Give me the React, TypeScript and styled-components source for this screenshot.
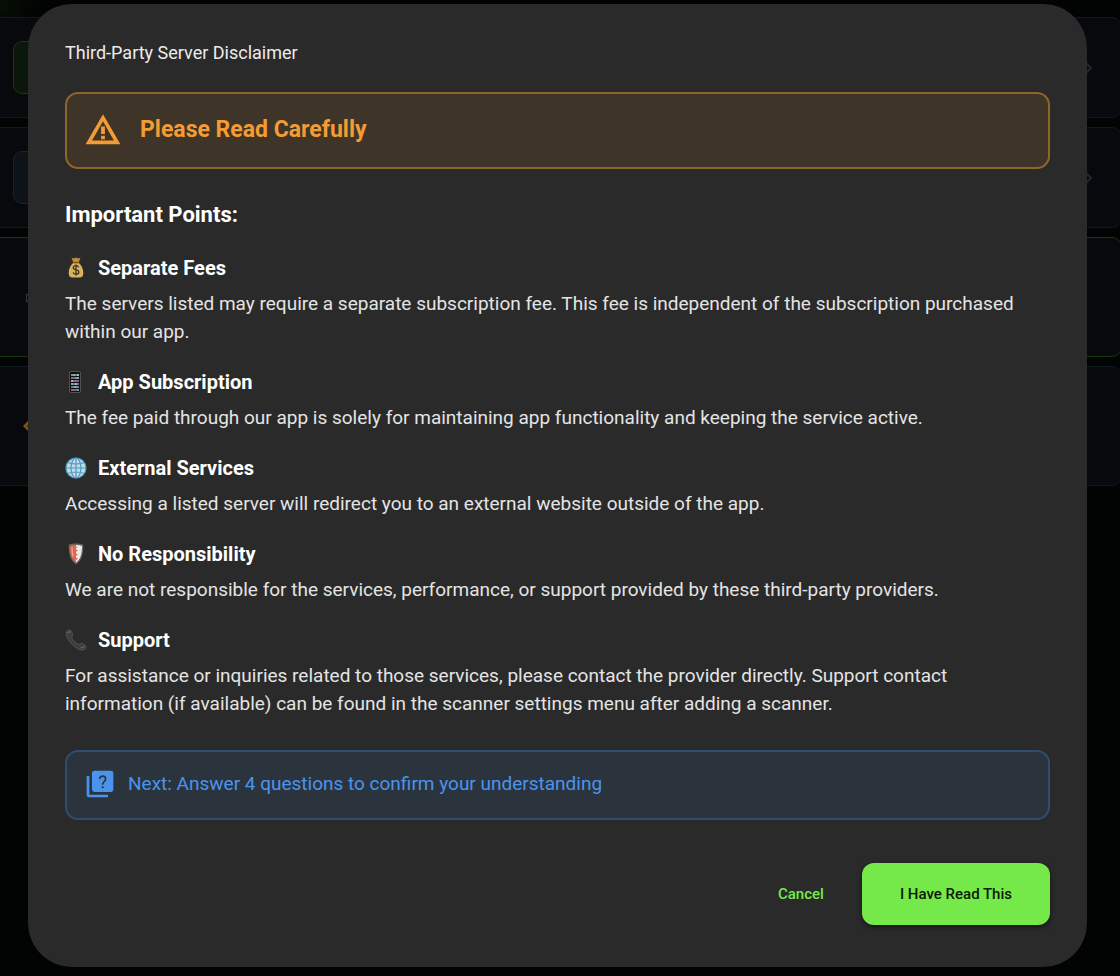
import React from "react";
import styled, { createGlobalStyle } from "styled-components";

const GlobalStyle = createGlobalStyle`
  * { box-sizing: border-box; }
  body { margin: 0; background: #020303; color: #fff; font-family: Roboto, "Liberation Sans", sans-serif; }
  h1, h2, h3, p, ul { margin: 0; padding: 0; }
`;

const Page = styled.div`
  position: relative;
  min-height: 100vh;
  padding: 4px 33px 8px 28px;
  overflow: hidden;
  background: radial-gradient(circle at 0 0, #061006 0, #020303 40px);
`;

const Backdrop = styled.div`
  position: absolute;
  inset: 0;
  display: flex;
  flex-direction: column;
  gap: 9px;
  padding-top: 17px;
`;

const ServerCard = styled.div<{ $tall?: boolean; $edge?: string }>`
  flex: none;
  display: flex;
  align-items: center;
  justify-content: space-between;
  height: ${(p) => (p.$tall ? 120 : 101)}px;
  margin: 0 -2px 0 -20px;
  padding: 0 28px 0 ${(p) => (p.$tall ? 42 : 32)}px;
  border: 1px solid ${(p) => p.$edge ?? "#11181e"};
  border-radius: 10px;
  background: #07090c;
`;

const Chip = styled.div<{ $green?: boolean }>`
  width: 53px;
  height: 53px;
  border: 1px solid ${(p) => (p.$green ? "#183a10" : "#17232c")};
  border-radius: 9px;
  background: ${(p) => (p.$green ? "#0b170b" : "#0d1318")};
`;

const Dialog = styled.main`
  position: relative;
  display: flex;
  flex-direction: column;
  padding: 35px 37px 42px;
  border-radius: 44px;
  background: #2a2a2a;
`;

const Title = styled.h1`
  font-size: 18px;
  line-height: 28px;
  font-weight: 400;
  color: #ececec;
`;

const Warning = styled.div`
  display: flex;
  align-items: center;
  gap: 18px;
  height: 77px;
  margin-top: 25px;
  padding: 0 17px 2px;
  border: 2px solid #91642b;
  border-radius: 13px;
  background: #3e3427;
  color: #f39c35;
`;

const WarningText = styled.h2`
  font-size: 23px;
  line-height: 28px;
  font-weight: 700;
`;

const SectionTitle = styled.h2`
  margin-top: 32px;
  font-size: 22px;
  line-height: 28px;
  font-weight: 700;
`;

const Points = styled.ul`
  display: flex;
  flex-direction: column;
  gap: 22px;
  margin-top: 25px;
  list-style: none;
`;

const Point = styled.li`
  display: flex;
  flex-direction: column;
  gap: 8px;
`;

const PointTitle = styled.h3`
  display: flex;
  align-items: center;
  gap: 11px;
  font-size: 20px;
  line-height: 28px;
  font-weight: 700;
`;

const PointText = styled.p`
  padding-right: 16px;
  font-size: 19px;
  line-height: 28px;
  font-weight: 400;
  color: #e4e4e4;
`;

const Notice = styled.div`
  display: flex;
  align-items: center;
  gap: 12px;
  height: 70px;
  margin-top: 32px;
  padding: 0 17px 2px;
  border: 2px solid #2e4d70;
  border-radius: 13px;
  background: #2b343d;
  color: #4a94ee;
  font-size: 19px;
  line-height: 28px;
`;

const Actions = styled.div`
  display: flex;
  justify-content: flex-end;
  gap: 14px;
  margin-top: 43px;
`;

const Button = styled.button<{ $primary?: boolean }>`
  height: 62px;
  padding: 0 ${(p) => (p.$primary ? 38 : 24)}px;
  border: 0;
  border-radius: 12px;
  background: ${(p) => (p.$primary ? "#76e94a" : "transparent")};
  box-shadow: ${(p) => (p.$primary ? "0 2px 5px rgba(0, 0, 0, 0.5)" : "none")};
  color: ${(p) => (p.$primary ? "#0b1a06" : "#76e94a")};
  font: 500 15px Roboto, "Liberation Sans", sans-serif;
  cursor: pointer;
`;

const Icon = styled.svg`
  display: block;
  flex: none;
`;

const Chevron = () => (
  <Icon width="8" height="14" viewBox="0 0 8 14" fill="none" stroke="#1f2731" strokeWidth="2">
    <path d="M1 2l5 5-5 5" />
  </Icon>
);

const WarningIcon = () => (
  <Icon width="38" height="38" viewBox="0 0 24 24" fill="currentColor">
    <path fillRule="evenodd" d="M12 2 1 21h22zM12 6.500 18.900 18.600H5.100z" />
    <path d="M10.800 9.800h2.400v4.800h-2.400zM10.800 15.700h2.400v2.200h-2.400z" />
  </Icon>
);

const QuizIcon = () => (
  <Icon width="32" height="32" viewBox="0 0 24 24" fill="currentColor">
    <path d="M4 6H2v14c0 1.100.9 2 2 2h14v-2H4V6z" />
    <rect x="6" y="2" width="16" height="16" rx="1.800" />
    <path d="M11.800 8.300c0-1.400.9-2.200 2.200-2.200s2.200.8 2.200 2.100c0 1.900-2.200 2-2.200 4.300" fill="none" stroke="#2b343d" strokeWidth="1.300" />
    <rect x="13.300" y="13.700" width="1.400" height="1.400" fill="#2b343d" />
  </Icon>
);

const MoneyBag = () => (
  <Icon width="22" height="22" viewBox="0 0 22 22">
    <path d="M6.500.8l2.500.8 2-1 2 1 2.500-.8-1.800 4.700H8.300z" fill="#b9913f" />
    <path d="M8.500 5.500h5c3 2.500 5 6.500 4.800 11-.2 3-1.600 4-3.800 4h-7c-2.200 0-3.600-1-3.800-4-.2-4.500 1.800-8.500 4.800-11z" fill="#d8b25c" />
    <path d="M7.800 5.600h6.400" stroke="#7c4f22" strokeWidth="1.400" />
    <path d="M13.700 10.200c-.5-1-1.500-1.500-2.700-1.500-1.600 0-2.700.8-2.700 2.100 0 3 5.500 1.200 5.500 4.200 0 1.400-1.200 2.200-2.800 2.200-1.400 0-2.500-.6-2.900-1.700M11 7.500v11" fill="none" stroke="#3d3526" strokeWidth="1.300" />
  </Icon>
);

const APP_COLORS = ["#6fc3d3", "#b06fd0", "#c9c7a8", "#df7150", "#5cc48c", "#6a86e0", "#d9d9d9"];

const Phone = () => (
  <Icon width="22" height="22" viewBox="0 0 22 22">
    <rect x="4.500" y=".5" width="11" height="21" rx="1.500" fill="#0f1113" stroke="#505254" />
    {[3, 6, 9, 12, 15, 18].map((y, r) =>
      [6, 8, 10, 12].map((x, c) => (
        <rect key={`${x}-${y}`} x={x} y={y} width="2" height="2" fill={APP_COLORS[(r * 3 + c * 2) % 7]} opacity=".8" />
      ))
    )}
  </Icon>
);

const Globe = () => (
  <Icon width="22" height="22" viewBox="0 0 22 22" fill="none" stroke="#4d9bc4" strokeWidth="1.200">
    <circle cx="11" cy="11" r="10" fill="#c3dbe4" />
    <ellipse cx="11" cy="11" rx="5" ry="10" />
    <path d="M11 1v20M1 11h20M3 5.500c4.500 2 11.500 2 16 0M3 16.500c4.500-2 11.500-2 16 0" />
  </Icon>
);

const Shield = () => (
  <Icon width="22" height="22" viewBox="0 0 22 22">
    <path d="M11 .5c2.600 0 5.200.4 7.300 1.200 0 9.300-1.500 15.600-7.300 19.800C5.200 17.300 3.700 11 3.700 1.700 5.800.9 8.400.5 11 .5z" fill="#6d6863" />
    <path d="M11 2c2 0 4.200.3 6 .9C16.900 11 15.500 16 11 19.600z" fill="#ececea" />
    <path d="M11 2c-2 0-4.200.3-6 .9C5.100 11 6.500 16 11 19.600V17l2-1.200-2-1.200V12.800l2-1.200-2-1.200V8.800l2-1.200-2-1.200V5.200l1.500-1L11 3.500z" fill="#dc6a50" />
    <path d="M7 4c0 4 .3 7 1.200 9.500" fill="none" stroke="#f0a896" strokeWidth="1.200" />
  </Icon>
);

const Receiver = () => (
  <Icon width="22" height="22" viewBox="0 0 22 22">
    <path d="M1.500 2.500C3 .5 4.500.4 6 2l1.700 3c.5 1.200-1.300 2-1 3.200.8 3 4 6.200 7 7.200 1.300.4 2-1.500 3.300-1l3 1.800c1.700 1.300 1.500 2.800-.5 4.200-2.500 1.700-7 .2-11.500-4.200C3.600 11.800-.5 6 1.500 2.500z" fill="#3c3e40" stroke="#595b5d" strokeWidth=".8" />
    <path d="M2.500 4l3-1.500M15.500 19l4-1.500" stroke="#6a6c6e" strokeWidth="1.200" />
  </Icon>
);

const POINTS = [
  { icon: MoneyBag, title: "Separate Fees", text: "The servers listed may require a separate subscription fee. This fee is independent of the subscription purchased within our app." },
  { icon: Phone, title: "App Subscription", text: "The fee paid through our app is solely for maintaining app functionality and keeping the service active." },
  { icon: Globe, title: "External Services", text: "Accessing a listed server will redirect you to an external website outside of the app." },
  { icon: Shield, title: "No Responsibility", text: "We are not responsible for the services, performance, or support provided by these third-party providers." },
  { icon: Receiver, title: "Support", text: "For assistance or inquiries related to those services, please contact the provider directly. Support contact information (if available) can be found in the scanner settings menu after adding a scanner." },
];

export default function App() {
  return (
    <Page>
      <GlobalStyle />
      <Backdrop aria-hidden="true">
        <ServerCard><Chip $green /><Chevron /></ServerCard>
        <ServerCard><Chip /><Chevron /></ServerCard>
        <ServerCard $tall $edge="#17380f">
          <Icon width="14" height="14" viewBox="0 0 14 14" fill="none" stroke="#3a3d40">
            <rect x="3.500" y="4.500" width="8" height="7" />
          </Icon>
        </ServerCard>
        <ServerCard $tall>
          <Icon width="14" height="14" viewBox="0 0 14 14" fill="none" stroke="#80501c" strokeWidth="3">
            <path d="M7 2l5 5-5 5-5-5z" />
          </Icon>
        </ServerCard>
      </Backdrop>
      <Dialog role="dialog" aria-labelledby="dialog-title">
        <Title id="dialog-title">Third-Party Server Disclaimer</Title>
        <Warning>
          <WarningIcon />
          <WarningText>Please Read Carefully</WarningText>
        </Warning>
        <SectionTitle>Important Points:</SectionTitle>
        <Points>
          {POINTS.map(({ icon: PointIcon, title, text }) => (
            <Point key={title}>
              <PointTitle><PointIcon />{title}</PointTitle>
              <PointText>{text}</PointText>
            </Point>
          ))}
        </Points>
        <Notice>
          <QuizIcon />
          <p>Next: Answer 4 questions to confirm your understanding</p>
        </Notice>
        <Actions>
          <Button type="button">Cancel</Button>
          <Button type="button" $primary>I Have Read This</Button>
        </Actions>
      </Dialog>
    </Page>
  );
}
